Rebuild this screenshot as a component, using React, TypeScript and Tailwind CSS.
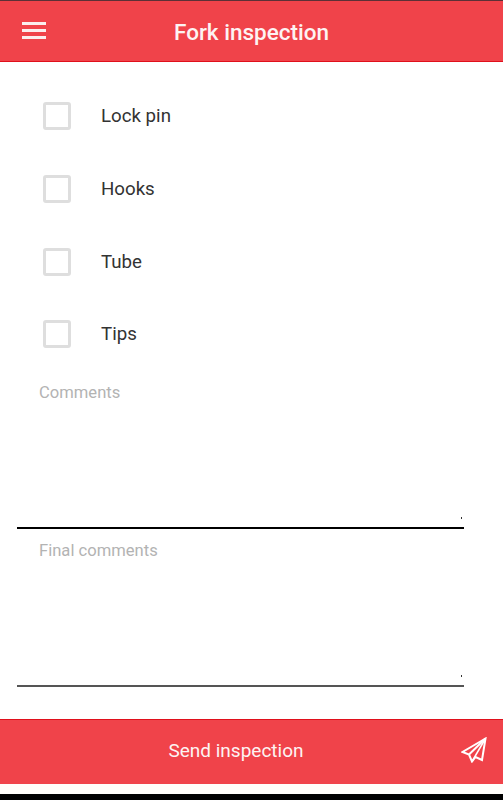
import React from 'react';

const items = ['Lock pin', 'Hooks', 'Tube', 'Tips'];

const PaperPlane = () => (
    <svg width="26" height="26" viewBox="0 0 26 26" fill="none" stroke="white" strokeWidth="2" strokeLinejoin="miter">
        <path d="M24.5 1.5 L1.5 15 L8 17.5 L11 24.5 L14.5 20 L21 23 Z" />
        <path d="M24.5 1.5 L8 17.5" />
        <path d="M24.5 1.5 L11 24.5" strokeWidth="1.5" />
    </svg>
);

const CommentField = ({ label, lineClass }: { label: string; lineClass: string }) => (
    <div className="h-[158px] flex flex-col">
        <label className="pl-[39px] pt-[8px] text-[16.6px] leading-[24px] text-[#b3b3b3]">{label}</label>
        <div className={`mt-auto mb-[2px] ml-[17px] w-[447px] h-[1.5px] relative ${lineClass}`}>
            <span className="absolute right-[2px] -top-[10px] w-[1.5px] h-[1.5px] bg-[#333]" />
        </div>
    </div>
);

export default function App() {
    return (
        <div className="w-[503px] h-[800px] bg-white flex flex-col overflow-hidden font-['Roboto',sans-serif]">
            <header className="h-[62px] shrink-0 bg-[#f0434a] border-t border-t-[#5c3036] border-b border-b-[#e0101c] relative flex items-center justify-center">
                <div className="absolute left-[22px] top-[21px] w-[24px] flex flex-col gap-[4.5px]">
                    <span className="h-[2.5px] bg-[#fbeeee]" />
                    <span className="h-[2.5px] bg-[#fbeeee]" />
                    <span className="h-[2.5px] bg-[#fbeeee]" />
                </div>
                <h1 className="text-[22.5px] font-medium text-[#fdf3f3] pt-[3px]">Fork inspection</h1>
            </header>

            <main className="flex-1 flex flex-col">
                <div className="pt-[18px] flex flex-col">
                    {items.map(item => (
                        <div key={item} className="h-[72.7px] flex items-center pl-[43px]">
                            <div className="w-[28px] h-[28px] border-[3px] border-[#dedede] rounded-[3px]" />
                            <span className="ml-[30px] text-[18.7px] text-[#333]">{item}</span>
                        </div>
                    ))}
                </div>
                <div className="mt-[2px]">
                    <CommentField label="Comments" lineClass="bg-black" />
                    <CommentField label="Final comments" lineClass="bg-[#555]" />
                </div>
            </main>

            <footer className="h-[65px] shrink-0 bg-[#f0434a] border-t border-t-[#e0101c] relative flex items-center justify-center pr-[31px]">
                <span className="text-[19px] text-[#fdf3f3] pb-[2px]">Send inspection</span>
                <div className="absolute right-[16px] top-[17px]"><PaperPlane /></div>
            </footer>
            <div className="h-[10px] shrink-0 bg-[#fffdfa]" />
            <div className="h-[6px] shrink-0 bg-black" />
        </div>
    );
}
